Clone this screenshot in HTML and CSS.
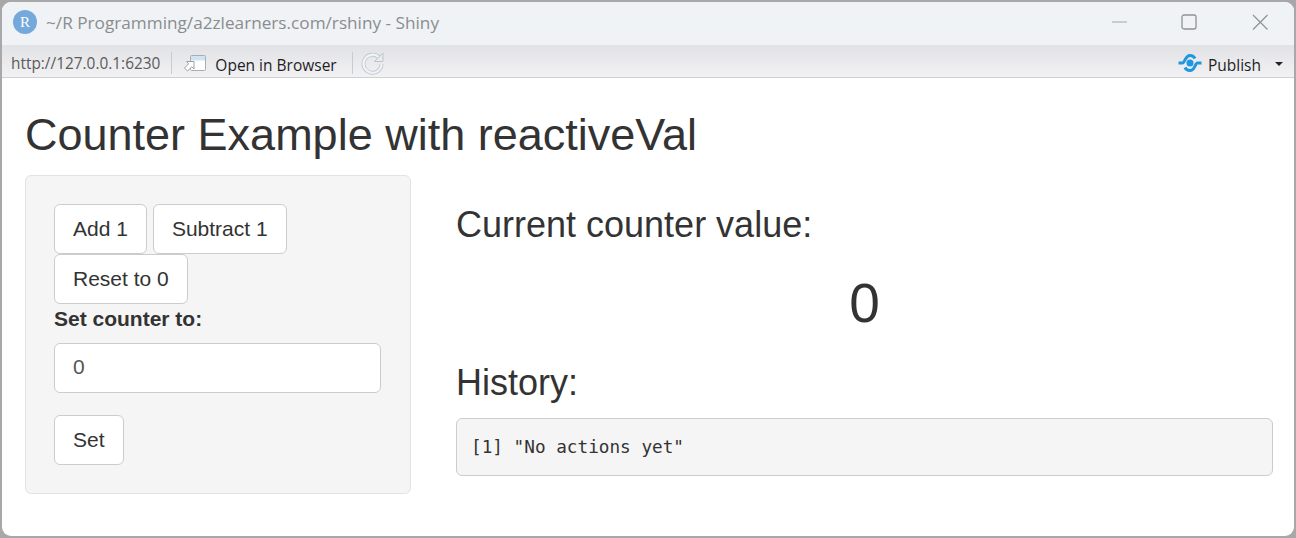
FILE: index.html
```html
<!DOCTYPE html>
<html lang="en">
<head>
  <meta charset="UTF-8" />
  <title>Shiny</title>
  <link rel="stylesheet" href="styles.css">
</head>
<body>
  <div class="window">

    <div class="titlebar">
      <span class="r-badge">R</span>
      <span class="title-text">~/R Programming/a2zlearners.com/rshiny - Shiny</span>
      <div class="win-controls">
        <svg width="16" height="16" viewBox="0 0 16 16"><path d="M0 8H15" stroke="#a3a5a8" stroke-width="1.2" fill="none"/></svg>
        <svg class="win-max" width="16" height="16" viewBox="0 0 16 16"><rect x="1" y="1" width="14" height="14" rx="2" stroke="#8f9194" stroke-width="1.3" fill="none"/></svg>
        <svg width="16" height="16" viewBox="0 0 16 16"><path d="M1 1L15.500 15.500M15.500 1L1 15.500" stroke="#8f9194" stroke-width="1.200" fill="none"/></svg>
      </div>
    </div>

    <div class="toolbar">
      <span class="url">http://127.0.0.1:6230</span>
      <span class="sep"></span>
      <svg class="open-icon" width="24" height="18" viewBox="0 0 24 18">
        <rect x="7.500" y="1.500" width="15" height="15" rx="1" fill="#fff" stroke="#a9adb2"/>
        <rect x="8" y="2" width="14" height="4.500" fill="#cfe3f5"/>
        <path d="M3.500 7.500H11V15L8.800 12.800L4.500 17L1.500 14L5.700 9.700Z" fill="#fff" stroke="#9aa0a5"/>
      </svg>
      <span class="open-text">Open in Browser</span>
      <span class="sep sep-right"></span>
      <svg class="reload" width="24" height="24" viewBox="0 0 24 24">
        <path d="M18 6.500A9 9 0 1 0 20.500 13" stroke="#c0cad2" stroke-width="4" fill="none"/>
        <path d="M18 6.500A9 9 0 1 0 20.500 13" stroke="#f1f3f5" stroke-width="2.200" fill="none"/>
        <path d="M13.500 10.500H22V2Z" fill="#e8ecef" stroke="#bcc5cd"/>
      </svg>
      <div class="publish">
        <svg width="24" height="20" viewBox="0 0 24 20">
          <circle cx="12" cy="10" r="3.500" fill="#1f97e0"/>
          <path d="M0.500 10H4.500C7 10 7 2.500 12 2.500C15 2.500 16.500 4.500 17 5.500M23.500 10H19.500C17 10 17 17.500 12 17.500C9 17.500 7.500 15.500 7 14.500" stroke="#1f97e0" stroke-width="3" fill="none"/>
        </svg>
        <span class="publish-text">Publish</span>
        <span class="caret"></span>
      </div>
    </div>

    <div class="page">
      <h1>Counter Example with reactiveVal</h1>
      <div class="row">
        <div class="well">
          <button class="btn">Add 1</button><button class="btn">Subtract 1</button><button class="btn">Reset to 0</button>
          <label for="set-to">Set counter to:</label>
          <input id="set-to" type="text" value="0" />
          <button class="btn btn-set">Set</button>
        </div>
        <div class="main">
          <h3>Current counter value:</h3>
          <div class="counter">0</div>
          <h3>History:</h3>
          <pre>[1] "No actions yet"</pre>
        </div>
      </div>
    </div>

  </div>
</body>
</html>
```

FILE: styles.css
```css
* {
  box-sizing: border-box;
}

html,
body {
  margin: 0;
  height: 100%;
}

body {
  background: #a8a8a8;
  padding: 2px;
  overflow: hidden;
}

.window {
  height: 534px;
  background: #fff;
  border-radius: 9px;
  overflow: hidden;
  font-family: "Liberation Sans", Arial, sans-serif;
  color: #333;
}

/* title bar */
.titlebar {
  height: 43px;
  background: #f0f3f6;
  display: flex;
  align-items: center;
  padding-left: 11px;
  padding-bottom: 3px;
}

.r-badge {
  width: 24px;
  height: 24px;
  border-radius: 50%;
  background: #75a9dc;
  color: #fff;
  font-family: "Liberation Serif", serif;
  font-size: 15px;
  line-height: 24px;
  text-align: center;
}

.title-text {
  margin-left: 9px;
  font-family: "Open Sans", sans-serif;
  font-size: 17.200px;
  color: #8b8c8e;
}

.win-controls {
  margin-left: auto;
  margin-right: 26px;
  margin-bottom: 1px;
  display: flex;
}

.win-max {
  margin: 0 55px 0 53px;
}

/* toolbar */
.toolbar {
  height: 33px;
  padding-top: 4px;
  background: linear-gradient(#e1e2e5, #f2f2f4);
  border-bottom: 1px solid #cfd0d2;
  display: flex;
  align-items: center;
  font-family: "Open Sans", sans-serif;
  font-size: 15.500px;
}

.url {
  margin-left: 9px;
  color: #5c5a58;
  font-size: 15.400px;
}

.sep {
  width: 1px;
  height: 22px;
  background: #c9cbce;
  margin-left: 11px;
}

.open-icon {
  margin-left: 11px;
}

.open-text {
  margin-left: 8px;
  padding-top: 3px;
  color: #1e1e1e;
}

.sep-right {
  margin-left: 15px;
}

.reload {
  margin-left: 8px;
}

.publish {
  margin-left: auto;
  margin-right: 11px;
  display: flex;
  align-items: center;
}

.publish-text {
  margin-left: 6px;
  padding-top: 3px;
  color: #1e1e1e;
}

.caret {
  margin-left: 14px;
  margin-top: 2px;
  border-left: 4px solid transparent;
  border-right: 4px solid transparent;
  border-top: 4px solid #222;
}

/* shiny page */
.page {
  padding: 0 21px 0 23px;
}

h1 {
  margin: 0;
  padding-top: 31px;
  height: 97px;
  font-size: 45px;
  line-height: 52px;
  font-weight: 400;
}

.row {
  display: flex;
  align-items: flex-start;
  gap: 45px;
}

.well {
  width: 386px;
  height: 319px;
  flex: none;
  padding: 28px;
  background: #f5f5f5;
  border: 1px solid #e3e3e3;
  border-radius: 6px;
}

.btn {
  height: 50px;
  padding: 0 18px;
  margin-right: 6px;
  vertical-align: top;
  background: #fff;
  border: 1px solid #ccc;
  border-radius: 6px;
  color: #333;
  font-family: inherit;
  font-size: 21px;
}

label {
  display: block;
  margin-top: 3px;
  height: 36px;
  font-size: 21px;
  line-height: 23px;
  font-weight: 700;
}

input {
  display: block;
  width: 327px;
  height: 50px;
  padding: 0 18px 2px;
  background: #fff;
  border: 1px solid #ccc;
  border-radius: 6px;
  color: #555;
  font-family: inherit;
  font-size: 21px;
}

.btn-set {
  margin-top: 22px;
}

.main {
  flex: 1;
}

h3 {
  margin: 0;
  font-size: 36px;
  line-height: 40px;
  font-weight: 400;
}

.main h3:first-child {
  margin-top: 30px;
}

.counter {
  height: 118px;
  padding-top: 25px;
  text-align: center;
  font-size: 55px;
  line-height: 66px;
}

pre {
  margin: 15px 0 0;
  height: 58px;
  padding: 0 14px;
  background: #f5f5f5;
  border: 1px solid #ccc;
  border-radius: 6px;
  font-family: "DejaVu Sans Mono", monospace;
  font-size: 17.700px;
  line-height: 56px;
  color: #333;
}
```
